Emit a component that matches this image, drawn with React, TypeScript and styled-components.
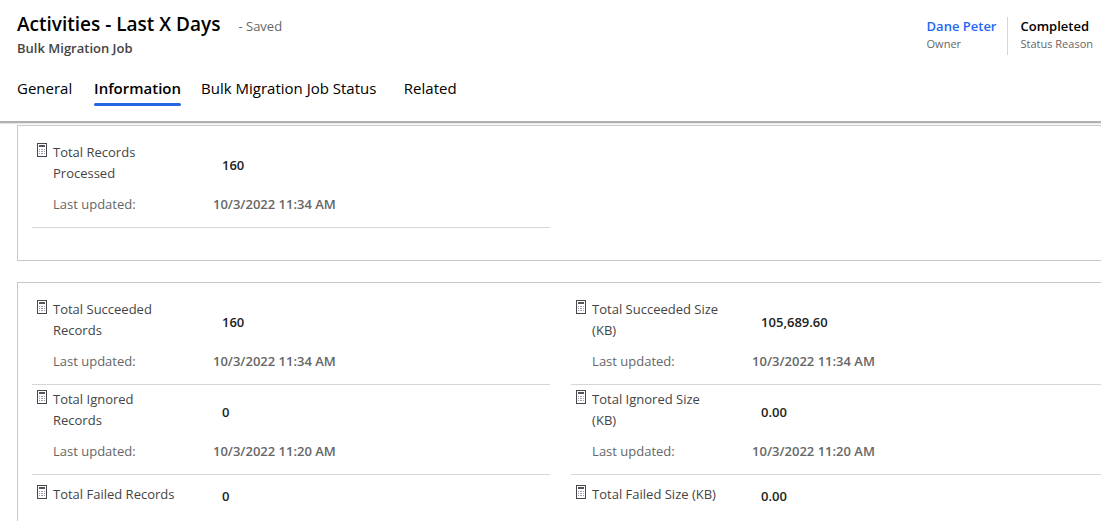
import React from "react";
import styled, { createGlobalStyle } from "styled-components";

const GlobalStyle = createGlobalStyle`
  *, *::before, *::after { box-sizing: border-box; }
  body {
    margin: 0;
    background: #fff;
    color: #333;
    font-family: "Segoe UI", "Open Sans", "Noto Sans", sans-serif;
    font-size: 13px;
    line-height: 21px;
  }
`;

const Page = styled.div`
  display: flex;
  flex-direction: column;
  height: 100vh;
  overflow: hidden;
`;

const Header = styled.header`
  flex: none;
  padding: 10px 8px 15px 17px;
  border-bottom: 2px solid #b1b1b1;
  box-shadow: 0 1px 1px #e6e6e6;
`;

const HeaderTop = styled.div`
  display: flex;
  justify-content: space-between;
`;

const TitleLine = styled.div`
  display: flex;
  align-items: baseline;
  gap: 18px;
`;

const Title = styled.h1`
  margin: 0;
  color: #000;
  font-size: 19px;
  font-weight: 600;
  line-height: 28px;
`;

const Saved = styled.span`
  color: #666;
`;

const Entity = styled.p`
  margin: 0;
  color: #444;
  font-weight: 600;
  line-height: 20px;
`;

const Facts = styled.div`
  display: flex;
  align-self: flex-start;
  margin-top: 7px;
`;

const Fact = styled.div`
  height: 38px;
  & + & {
    margin-left: 11px;
    padding-left: 12px;
    border-left: 1px solid #d6d6d6;
  }
`;

const FactValue = styled.div`
  color: #000;
  font-weight: 600;
  line-height: 18px;
`;

const OwnerLink = styled.a`
  color: #1f66f5;
  text-decoration: none;
`;

const FactLabel = styled.div`
  color: #666;
  font-size: 11px;
  line-height: 18px;
`;

const Tabs = styled.nav`
  display: flex;
  gap: 20px;
  margin-top: 18px;
`;

/* The hidden semibold copy keeps each tab's width steady when it becomes active. */
const Tab = styled.button<{ $active?: boolean }>`
  position: relative;
  display: flex;
  flex-direction: column;
  height: 30px;
  padding: 2px 0 0;
  border: 0;
  background: none;
  color: #000;
  font: inherit;
  font-size: 15px;
  font-weight: ${(p) => (p.$active ? 600 : 400)};
  text-align: left;
  white-space: nowrap;
  cursor: pointer;
  &::before {
    content: attr(data-label);
    order: 1;
    height: 0;
    overflow: hidden;
    visibility: hidden;
    font-weight: 600;
  }
  &::after {
    content: "";
    display: ${(p) => (p.$active ? "block" : "none")};
    position: absolute;
    inset: auto 0 0;
    height: 3px;
    border-radius: 2px;
    background: #2266e3;
  }
`;

const Content = styled.main`
  display: flex;
  flex: 1;
  flex-direction: column;
  gap: 21px;
  min-height: 0;
  padding: 2px 0 0 17px;
`;

const Panel = styled.section<{ $fill?: boolean }>`
  display: grid;
  flex: ${(p) => (p.$fill ? "1" : "none")};
  grid-template-columns: 44fr 45fr;
  column-gap: 21px;
  align-content: start;
  padding: 12px 0 ${(p) => (p.$fill ? 0 : 32)}px 14px;
  border: 1px solid #c8c8c8;
  border-right: 0;
  border-bottom-width: ${(p) => (p.$fill ? 0 : 1)}px;
`;

const Field = styled.div<{ $updated: boolean }>`
  display: grid;
  grid-template-columns: 16px 130px 1fr;
  grid-template-rows: minmax(31px, auto);
  row-gap: 10px;
  align-items: center;
  padding: 4px 0 ${(p) => (p.$updated ? 12 : 0)}px 5px;
  border-bottom: ${(p) => (p.$updated ? "1px solid #d6d6d6" : "0")};
`;

const LabelGroup = styled.div`
  display: grid;
  grid-column: 1 / 3;
  grid-template-columns: 16px 1fr;
  align-items: start;
`;

const Label = styled.span`
  color: #444;
`;

const Value = styled.output`
  padding: 4px 0 0 39px;
  color: #222;
  font-weight: 600;
`;

const UpdatedLabel = styled.span`
  grid-column: 2;
  color: #666;
`;

const UpdatedTime = styled.time`
  padding-left: 30px;
  color: #666;
  font-weight: 600;
`;

const IconSvg = styled.svg`
  display: block;
  margin-top: 1px;
`;

const CalculatorIcon = () => (
  <IconSvg width="10" height="14" viewBox="0 0 10 14" shapeRendering="crispEdges" aria-hidden="true">
    <rect x="0.5" y="0.5" width="9" height="13" fill="#fff" stroke="#4a4650" />
    <rect x="2" y="2" width="6" height="2" fill="#555" />
    <path d="M2 6h1v1H2zM4 6h2v1H4zM7 6h1v1H7zM2 8h1v1H2zM4 8h2v1H4zM7 8h1v1H7zM2 10h1v1H2zM4 10h2v1H4zM7 10h1v1H7z" fill="#9c9ca6" />
  </IconSvg>
);

type RollupProps = { id: string; label: string; value: string; updated?: string };

const RollupField = ({ id, label, value, updated }: RollupProps) => (
  <Field $updated={Boolean(updated)}>
    <LabelGroup>
      <CalculatorIcon />
      <Label id={id}>{label}</Label>
    </LabelGroup>
    <Value aria-labelledby={id}>{value}</Value>
    {updated && (
      <>
        <UpdatedLabel>Last updated:</UpdatedLabel>
        <UpdatedTime>{updated}</UpdatedTime>
      </>
    )}
  </Field>
);

const tabs = ["General", "Information", "Bulk Migration Job Status", "Related"];

const processed: RollupProps[] = [
  { id: "processed", label: "Total Records Processed", value: "160", updated: "10/3/2022 11:34 AM" },
];

const totals: RollupProps[] = [
  { id: "succeeded", label: "Total Succeeded Records", value: "160", updated: "10/3/2022 11:34 AM" },
  { id: "succeeded-size", label: "Total Succeeded Size (KB)", value: "105,689.60", updated: "10/3/2022 11:34 AM" },
  { id: "ignored", label: "Total Ignored Records", value: "0", updated: "10/3/2022 11:20 AM" },
  { id: "ignored-size", label: "Total Ignored Size (KB)", value: "0.00", updated: "10/3/2022 11:20 AM" },
  { id: "failed", label: "Total Failed Records", value: "0" },
  { id: "failed-size", label: "Total Failed Size (KB)", value: "0.00" },
];

export default function App() {
  return (
    <Page>
      <GlobalStyle />
      <Header>
        <HeaderTop>
          <div>
            <TitleLine>
              <Title>Activities - Last X Days</Title>
              <Saved>- Saved</Saved>
            </TitleLine>
            <Entity>Bulk Migration Job</Entity>
          </div>
          <Facts>
            <Fact>
              <FactValue>
                <OwnerLink href="#owner">Dane Peter</OwnerLink>
              </FactValue>
              <FactLabel>Owner</FactLabel>
            </Fact>
            <Fact>
              <FactValue>Completed</FactValue>
              <FactLabel>Status Reason</FactLabel>
            </Fact>
          </Facts>
        </HeaderTop>
        <Tabs>
          {tabs.map((name) => (
            <Tab
              key={name}
              data-label={name}
              $active={name === "Information"}
              aria-current={name === "Information" ? "page" : undefined}
            >
              {name}
            </Tab>
          ))}
        </Tabs>
      </Header>
      <Content>
        <Panel>
          {processed.map((f) => <RollupField key={f.id} {...f} />)}
        </Panel>
        <Panel $fill>
          {totals.map((f) => <RollupField key={f.id} {...f} />)}
        </Panel>
      </Content>
    </Page>
  );
}
